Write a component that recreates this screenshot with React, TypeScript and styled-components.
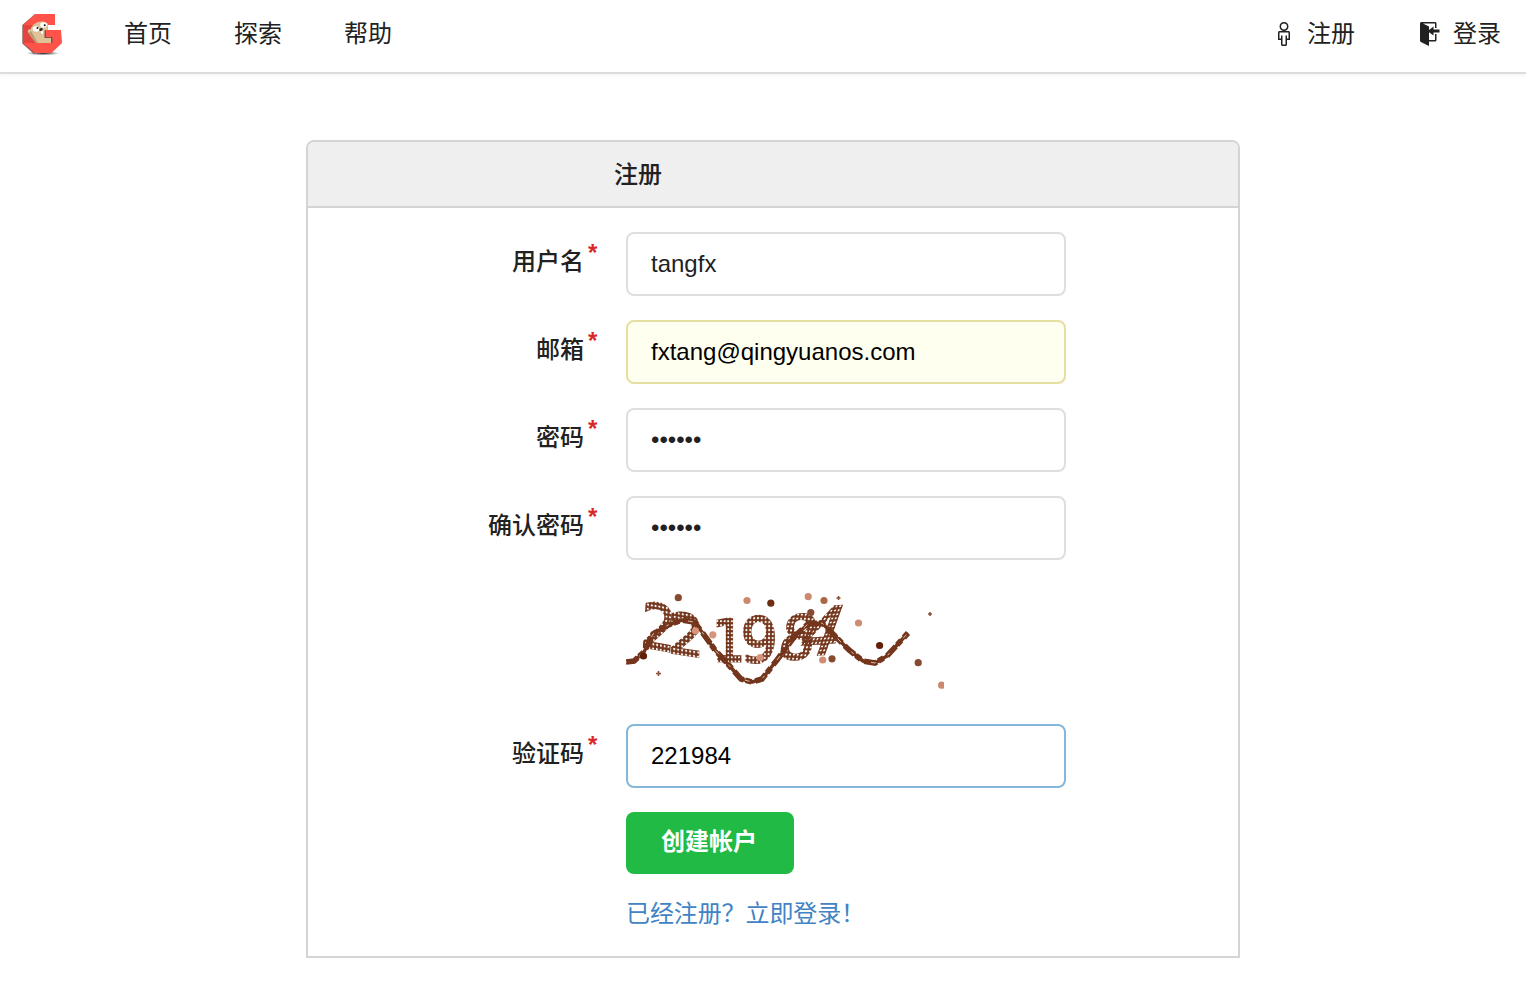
import React from 'react';
import styled, { createGlobalStyle } from 'styled-components';

const Global = createGlobalStyle`
  * { box-sizing: border-box; }
  body {
    margin: 0;
    background: #fff;
    color: #212121;
    font: 24px/34px "Liberation Sans", "Noto Sans CJK SC", sans-serif;
  }
`;

const Navbar = styled.nav`
  display: flex;
  align-items: center;
  height: 74px;
  padding: 0 25px 4px 21px;
  border-bottom: 2px solid #dddddd;
  box-shadow: 0 2px 3px rgba(0, 0, 0, 0.04);
`;

const Logo = styled.svg`
  width: 42px;
  height: 44px;
  margin-right: 61px;
`;

const NavLink = styled.a<{ $after?: number; $gap?: number }>`
  display: flex;
  align-items: center;
  gap: ${(p) => p.$gap ?? 0}px;
  margin-right: ${(p) => p.$after ?? 62}px;
  color: #212121;
`;

const Spacer = styled.div`
  flex: 1;
`;

const Octicon = styled.svg`
  height: 24px;
  fill: #212121;
`;

const Card = styled.section`
  width: 934px;
  height: 818px;
  margin: 66px 0 0 306px;
  border: 2px solid #d4d4d5;
  border-radius: 8px 8px 0 0;
`;

const CardHeader = styled.h3`
  height: 66px;
  margin: 0;
  padding: 16px 0 0 306px;
  border-bottom: 2px solid #d4d4d5;
  border-radius: 6px 6px 0 0;
  background: #efefef;
  font-size: 24px;
  font-weight: 500;
`;

const Form = styled.form`
  display: grid;
  grid-template-columns: 290px 440px;
  column-gap: 28px;
  row-gap: 24px;
  padding-top: 24px;
`;

const Label = styled.label`
  display: flex;
  justify-content: flex-end;
  padding-top: 13px;
  font-weight: 500;

  &::after {
    content: '*';
    width: 10px;
    margin: -9px 0 0 4px;
    color: #db2828;
    font-weight: 700;
  }
`;

type Tone = 'plain' | 'autofill' | 'focus';
const tones: Record<Tone, { bg: string; line: string; ink: string }> = {
  plain: { bg: '#fff', line: '#dededf', ink: '#212121' },
  autofill: { bg: '#fffff0', line: '#e5dfa1', ink: '#000' },
  focus: { bg: '#fff', line: '#85b7d9', ink: '#000' },
};

const Input = styled.input<{ $tone: Tone }>`
  width: 440px;
  height: 64px;
  padding: 0 23px;
  border: 2px solid ${(p) => tones[p.$tone].line};
  border-radius: 8px;
  outline: none;
  background: ${(p) => tones[p.$tone].bg};
  color: ${(p) => tones[p.$tone].ink};
  font: 24px "Liberation Sans", sans-serif;
`;

const Captcha = styled.svg`
  grid-column: 2;
  width: 318px;
  height: 116px;
`;

const Submit = styled.button`
  grid-column: 2;
  width: 168px;
  height: 62px;
  padding: 0 2px 8px 0;
  border: 0;
  border-radius: 8px;
  background: #21ba45;
  color: #fff;
  font: 700 24px "Liberation Sans", "Noto Sans CJK SC", sans-serif;
`;

const LoginLink = styled.a`
  grid-column: 2;
  margin-top: -1px;
  color: #4183c4;
  letter-spacing: -0.1px;
`;

interface FieldProps {
  id: string;
  label: string;
  value: string;
  type?: string;
  tone?: Tone;
}

function Field({ id, label, value, type = 'text', tone = 'plain' }: FieldProps) {
  return (
    <>
      <Label htmlFor={id}>{label}</Label>
      <Input id={id} type={type} defaultValue={value} $tone={tone} />
    </>
  );
}

function GopherLogo() {
  return (
    <Logo viewBox="21 12 42 44">
      <defs>
        <radialGradient id="ground">
          <stop offset="0" stopColor="#000" stopOpacity=".85" />
          <stop offset="1" stopColor="#000" stopOpacity="0" />
        </radialGradient>
      </defs>
      <ellipse cx="43" cy="53.3" rx="17" ry="2" fill="url(#ground)" />
      <path d="M35 14L22.300 25v18.500L34 54l2-1V14z" fill="#8e5a55" />
      <path d="M35.500 14H55v11H23L35.500 14z" fill="#ff5349" />
      <path d="M23 25h25v18H23z" fill="#e2453d" />
      <path d="M45 30h16l1 13-10.500 10H35L23 43h22z" fill="#ff5349" />
      <path d="M28.500 33c-2-2 .5-4.500 2-3.500C32 23 42 19 47 23c1.300.8 1.500 2.500.8 4L48 30h-3v8h6.500v5H36c-2.500-3-5.500-7-7.500-10z" fill="#dfc298" />
      <path d="M31 31l7 12h-2l-7.500-10z" fill="#bd9b72" />
      <path d="M44.500 30.500V38H51v5h1.500v-6H46v-6.500z" fill="#7c524a" />
      <ellipse cx="36" cy="29" rx="3.300" ry="2.800" fill="#fff" />
      <ellipse cx="43.500" cy="25" rx="3.400" ry="2.700" fill="#fff" />
      <circle cx="37.500" cy="28" r="1" fill="#111" />
      <circle cx="44.700" cy="25.200" r="1" fill="#111" />
      <ellipse cx="41" cy="29.500" rx="1.900" ry="1.300" fill="#33251f" transform="rotate(-25 41 29.500)" />
      <path d="M41 31l2 .2v2.500l-2-.2z" fill="#fff" />
    </Logo>
  );
}

const digits = [
  { char: '2', size: 58, at: 'matrix(.94 .17 -.06 1.06 640 646)' },
  { char: '2', size: 56, at: 'matrix(1 .15 -.02 1 668 652)' },
  { char: '1', size: 58, at: 'matrix(.9 .01 0 1 712 661)' },
  { char: '9', size: 62, at: 'matrix(.95 0 -.02 1 740 662)' },
  { char: '8', size: 60, at: 'matrix(.95 .04 -.2 1 776 658)' },
  { char: '4', size: 66, at: 'matrix(.93 -.06 -.36 1 795 656)' },
];

const specks: [number, number, string][] = [
  [678.3, 597.7, '#87492f'],
  [747, 600.5, '#cb8a70'],
  [770.8, 603.2, '#6d2e14'],
  [695.5, 630.8, '#d8947a'],
  [712.8, 634.8, '#d8947a'],
  [760.2, 657.5, '#d8947a'],
  [643.5, 656, '#632009'],
  [808.2, 596.6, '#cb8a70'],
  [824, 600.5, '#ac6749'],
  [810.8, 612.5, '#87492f'],
  [858.5, 623, '#d08c75'],
  [879.6, 645.5, '#632009'],
  [832, 658.8, '#87492f'],
  [822.7, 660, '#d08c75'],
  [918.2, 662.7, '#87492f'],
  [941.6, 685.2, '#cb8a70'],
];

const wave =
  'M626 662L634 661L644 652L653 634L668 625L682 620L694 622L702 632L715 650L727 663L741 679L752 682L762 679L777 660L795 636L808 624L822 623L834 635L849 650L863 661L875 663L887 656L897 645L908 633';

function CaptchaImage() {
  return (
    <Captcha viewBox="626 584 318 116" aria-label="221984">
      <defs>
        <pattern id="mesh" x="626" y="584" width="4" height="4" patternUnits="userSpaceOnUse">
          <path d="M2 0v4M0 2h4" stroke="#73351b" strokeWidth="1.800" />
          <circle cx="2" cy="2" r="1.600" fill="#73351b" />
        </pattern>
      </defs>
      {digits.map((d, i) => (
        <text
          key={i}
          transform={d.at}
          fontFamily="DejaVu Sans"
          fontSize={d.size}
          fill="url(#mesh)"
          stroke="url(#mesh)"
          strokeWidth="2.400"
        >
          {d.char}
        </text>
      ))}
      <path d={wave} fill="none" stroke="#73351b" strokeWidth="3.500" strokeLinejoin="round" />
      <path d={wave} fill="none" stroke="#73351b" strokeWidth="5.600" strokeDasharray="13 2 6 4" />
      <path d={wave} fill="none" stroke="#d9b9a8" strokeWidth="1" strokeDasharray="5 14 3 20" strokeDashoffset="4" />
      {specks.map(([x, y, color], i) => (
        <circle key={i} cx={x} cy={y} r={3.6} fill={color} />
      ))}
      <path d="M656 673.500h5M658.500 671v5M836.500 598h4M838.500 596v4M928 614h4M930 612v4" stroke="#8b5038" strokeWidth="1.600" />
    </Captcha>
  );
}

export default function App() {
  return (
    <>
      <Global />
      <Navbar>
        <GopherLogo />
        <NavLink>首页</NavLink>
        <NavLink>探索</NavLink>
        <NavLink>帮助</NavLink>
        <Spacer />
        <NavLink $gap={17} $after={65}>
          <Octicon viewBox="0 0 8 16" width="12">
            <path d="M7 6H1c-.55 0-1 .45-1 1v5h2v3c0 .55.45 1 1 1h2c.55 0 1-.45 1-1v-3h2V7c0-.55-.45-1-1-1zm0 5H6V9H5v6H3V9H2v2H1V7h6v4zm0-8c0-1.660-1.340-3-3-3S1 1.340 1 3s1.340 3 3 3 3-1.340 3-3zM4 5c-1.110 0-2-.89-2-2 0-1.110.89-2 2-2 1.110 0 2 .89 2 2 0 1.110-.89 2-2 2z" />
          </Octicon>
          注册
        </NavLink>
        <NavLink $gap={13} $after={0}>
          <Octicon viewBox="1 0 13.333 16" width="20">
            <path d="M7 6.750V12h4V8h1v4c0 .55-.45 1-1 1H7v3l-5.450-2.720c-.33-.17-.55-.52-.55-.91V1c0-.55.45-1 1-1h9c.55 0 1 .45 1 1v3h-1V1H3l4 2v2.250L10 3v2h4v2h-4v2L7 6.750z" />
          </Octicon>
          登录
        </NavLink>
      </Navbar>
      <Card>
        <CardHeader>注册</CardHeader>
        <Form>
          <Field id="user" label="用户名" value="tangfx" />
          <Field id="email" label="邮箱" value="fxtang@qingyuanos.com" tone="autofill" />
          <Field id="password" label="密码" value="123456" type="password" />
          <Field id="retype" label="确认密码" value="123456" type="password" />
          <CaptchaImage />
          <Field id="captcha" label="验证码" value="221984" tone="focus" />
          <Submit type="button">创建帐户</Submit>
          <LoginLink>已经注册？立即登录！</LoginLink>
        </Form>
      </Card>
    </>
  );
}
